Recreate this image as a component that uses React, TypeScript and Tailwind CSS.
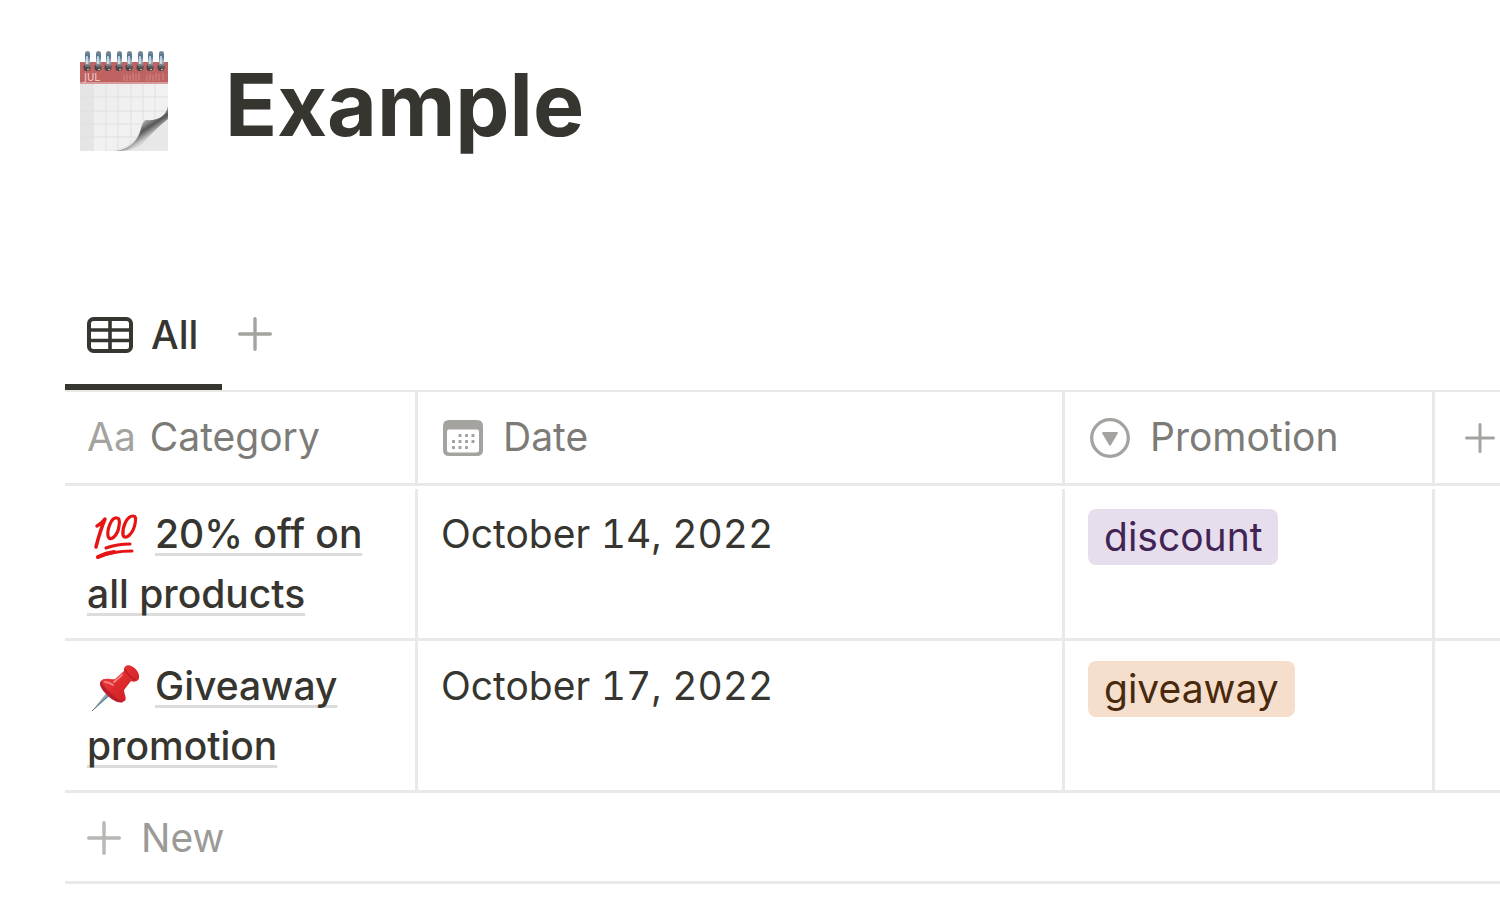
import React from 'react';

interface Entry {
  title: string;
  icon: React.ReactNode;
  date: string;
  promotion: string;
  tagClass: string;
}

function DeskCalendar() {
  const rings = [7, 18, 28, 39, 49, 60, 70, 81];

  return (
    <svg width="90" height="102" viewBox="0 0 90 102" className="shrink-0" aria-hidden="true">
      <defs>
        <linearGradient id="paper" x1="0" y1="0" x2="1" y2="1">
          <stop offset="0" stopColor="#ebebeb" />
          <stop offset="0.6" stopColor="#f2f2f2" />
          <stop offset="1" stopColor="#e8e8e8" />
        </linearGradient>
        <linearGradient id="curl" x1="60" y1="68" x2="72" y2="86" gradientUnits="userSpaceOnUse">
          <stop offset="0" stopColor="#e0e0e0" />
          <stop offset="0.3" stopColor="#a0a0a0" />
          <stop offset="0.6" stopColor="#565656" />
          <stop offset="1" stopColor="#d4d4d4" />
        </linearGradient>
        <linearGradient id="ring" x1="0" y1="0" x2="0" y2="1">
          <stop offset="0" stopColor="#8a8f94" />
          <stop offset="0.3" stopColor="#4f7397" />
          <stop offset="0.6" stopColor="#a9b8c3" />
          <stop offset="1" stopColor="#3d3d3d" />
        </linearGradient>
      </defs>
      <path d="M1 33H89V101H1Z" fill="url(#paper)" />
      <path d="M1 33H14V101H1Z" fill="#e5e5e5" />
      <path d="M14 33V101M27 33V101M39 33V101M52 33V101M64 33V75M76 33V70M1 47H89M1 61H89M1 74H66M1 87H58" stroke="#e0e0e0" strokeWidth="1" fill="none" />
      <path d="M26 101C44 100 55 93 60 83C63 75 64 71 67 70C78 72 87 68 89 60V101Z" fill="#e8e8e8" />
      <path d="M37 101C50 99 58 91 61 82C63 75 64 71 67 70C78 71 87 67 89 56V69C80 76 73 83 66 91C60 98 51 101 37 101Z" fill="url(#curl)" />
      <path d="M1 12H89V33H1Z" fill="#bf6262" />
      <path d="M1 32H89V34H1Z" fill="#d79b9b" />
      <text x="5" y="31" fontSize="10" fill="#efc9c9" fontFamily="DejaVu Sans, sans-serif">JUL</text>
      <path d="M45 25V31M48 24V31M51 25V31M54 23V31M57 24V31M60 23V31M68 25V31M71 24V31M74 25V31M77 23V31M80 24V31M84 23V30" stroke="#cf8787" strokeWidth="1" />
      {rings.map((x) => (
        <g key={x}>
          <circle cx={x + 1} cy="17.500" r="3.5" fill="#4d4343" />
          <circle cx={x + 2} cy="19" r="1.2" fill="#c9b4b4" />
          <rect x={x - 1} y="1" width="5" height="18" rx="2.5" fill="url(#ring)" />
          <path d={`M${x + 1} 6V14`} stroke="#e6edf2" strokeWidth="1.4" />
        </g>
      ))}
    </svg>
  );
}

function HundredIcon() {
  return (
    <svg width="52" height="48" viewBox="0 0 52 48" fill="none" stroke="#e61414" strokeLinecap="round" strokeLinejoin="round" aria-hidden="true">
      <path d="M10 13Q14 11 18 6Q13 18 9 34" strokeWidth="3.5" />
      <path d="M30 5C24 4 20 17 21 23C23 30 31 22 32 13C33 8 32 5 30 5Z" strokeWidth="3.2" />
      <path d="M46 3C40 3 35 14 36 22C38 28 46 21 48 11C49 6 49 3 46 3Z" strokeWidth="3.2" />
      <path d="M19 35Q30 31 43 31" strokeWidth="3.2" />
      <path d="M11 44Q26 38 45 38" strokeWidth="3" />
      <path d="M11 44Q19 40 27 39" strokeWidth="4" />
    </svg>
  );
}

function PushpinIcon() {
  return (
    <svg width="52" height="50" viewBox="0 0 52 50" aria-hidden="true">
      <defs>
        <linearGradient id="pin" x1="0" y1="0" x2="1" y2="1">
          <stop offset="0" stopColor="#f04444" />
          <stop offset="0.5" stopColor="#dd2a2d" />
          <stop offset="1" stopColor="#c81d25" />
        </linearGradient>
      </defs>
      <path d="M5 48L21 28L25 31Z" fill="#8fa9b8" />
      <path d="M5 48L24 30" stroke="#5b6f7c" strokeWidth="1" />
      <path d="M14 18C17 14 25 17 31 23C37 29 40 36 36 39C32 41 25 37 20 32C15 27 11 21 14 18Z" fill="#b91c2b" />
      <path d="M15 17C20 14 25 17 28 16L37 8C36 3 41 0 46 4C51 7 54 14 51 17C49 19 46 19 44 18L37 27C37 31 40 34 38 38C34 38 28 35 24 30C19 26 14 21 15 17Z" fill="url(#pin)" />
      <path d="M38 6C40 11 44 15 49 17" stroke="#b51e2a" strokeWidth="1.5" fill="none" />
      <path d="M27 19L35 12M18 19Q22 19 26 22" stroke="#f58080" strokeWidth="2" strokeLinecap="round" fill="none" />
    </svg>
  );
}

function TableIcon() {
  return (
    <svg width="46" height="36" viewBox="0 0 46 36" fill="none" stroke="#37352f" aria-hidden="true">
      <rect x="2" y="2" width="42" height="32" rx="4.5" strokeWidth="4" />
      <path d="M23 2V34M2 13H44M2 23.5H44" strokeWidth="3.6" />
    </svg>
  );
}

function PlusIcon({ size = 34, color = '#a5a39f' }: { size?: number; color?: string }) {
  return (
    <svg width={size} height={size} viewBox="0 0 34 34" className="shrink-0" stroke={color} strokeWidth="3.4" strokeLinecap="round" aria-hidden="true">
      <path d="M17 1.700V32.300M1.700 17H32.300" />
    </svg>
  );
}

function DateIcon() {
  const dots = [
    [17, 15.5], [23.5, 15.5], [30, 15.5],
    [10.5, 21.5], [17, 21.5], [23.5, 21.5], [30, 21.5],
    [10.5, 27.5], [17, 27.5], [23.5, 27.5],
  ];

  return (
    <svg width="40" height="36" viewBox="0 0 40 36" fill="#a5a39f" aria-hidden="true">
      <path fillRule="evenodd" d="M6 0H34Q40 0 40 6V30Q40 36 34 36H6Q0 36 0 30V6Q0 0 6 0ZM6 9.500Q4 9.500 4 11.500V30Q4 32.500 6.500 32.500H33.500Q36 32.500 36 30V11.500Q36 9.500 34 9.500Z" />
      {dots.map(([x, y]) => (
        <rect key={`${x}-${y}`} x={x - 1.5} y={y - 1.5} width="3" height="3" rx="0.5" />
      ))}
    </svg>
  );
}

function SelectIcon() {
  return (
    <svg width="40" height="40" viewBox="0 0 40 40" aria-hidden="true">
      <circle cx="20" cy="20" r="18.300" fill="none" stroke="#a5a39f" strokeWidth="3.300" />
      <path d="M13 14H27Q28.500 14 27.700 15.500L21 27Q20 28.500 19 27L12.300 15.500Q11.500 14 13 14Z" fill="#a5a39f" />
    </svg>
  );
}

const entries: Entry[] = [
  {
    title: '20% off on all products',
    icon: <HundredIcon />,
    date: 'October 14, 2022',
    promotion: 'discount',
    tagClass: 'bg-[#e6deed] text-[#412454]',
  },
  {
    title: 'Giveaway promotion',
    icon: <PushpinIcon />,
    date: 'October 17, 2022',
    promotion: 'giveaway',
    tagClass: 'bg-[#f5dfcc] text-[#49290e]',
  },
];

function HeaderCell({ icon, label }: { icon: React.ReactNode; label: string }) {
  return (
    <th scope="col" className="border-r-3 border-b-3 border-[#e9e9e7] pl-[25px] font-normal">
      <div className="flex h-[91px] items-center gap-5">
        {icon}
        <span>{label}</span>
      </div>
    </th>
  );
}

export default function App() {
  return (
    <main className="min-h-screen overflow-x-hidden bg-white pl-[65px] font-['Inter',sans-serif] text-[39px] text-[#37352f]">
      <header className="flex items-center gap-14 pt-[50px] pl-3.5">
        <DeskCalendar />
        <h1 className="pt-2 text-[86px] leading-[94px] font-bold">Example</h1>
      </header>

      <nav className="mt-[126px] flex h-[114px] items-stretch border-b-2 border-[#e9e9e7]">
        <button type="button" className="flex items-center gap-[18px] border-b-6 border-[#37352f] pt-2 pr-6 pl-[22px] font-medium">
          <TableIcon />
          All
        </button>
        <button type="button" aria-label="Add view" className="ml-4">
          <PlusIcon />
        </button>
      </nav>

      <table className="w-full table-fixed border-separate border-spacing-0 text-left">
        <colgroup>
          <col className="w-[353px]" />
          <col />
          <col className="w-[370px]" />
          <col className="w-[65px]" />
        </colgroup>
        <thead className="text-[#7d7b77]">
          <tr>
            <th scope="col" className="border-r-3 border-b-3 border-[#e9e9e7] pl-[22px] font-normal">
              <div className="flex h-[91px] items-center gap-3.5">
                <span className="text-[#a5a39f]">Aa</span>
                <span>Category</span>
              </div>
            </th>
            <HeaderCell icon={<DateIcon />} label="Date" />
            <HeaderCell icon={<SelectIcon />} label="Promotion" />
            <th scope="col" className="border-b-3 border-[#e9e9e7] pl-[30px]">
              <button type="button" aria-label="Add property" className="flex">
                <PlusIcon size={30} />
              </button>
            </th>
          </tr>
        </thead>
        <tbody className="align-top leading-[60px] before:block before:h-[3px] before:content-['']">
          {entries.map((entry) => (
            <tr key={entry.title}>
              <td className="border-r-3 border-b-3 border-[#e9e9e7] pt-[15px] pr-6 pb-3.5 pl-[22px] font-medium">
                <span className="mr-4 inline-flex h-[48px] w-[52px] items-center align-[-13px]">{entry.icon}</span>
                <a href="#" className="underline decoration-[#dcdcda] decoration-3 underline-offset-[5px] [text-decoration-skip-ink:none]">
                  {entry.title}
                </a>
              </td>
              <td className="border-r-3 border-b-3 border-[#e9e9e7] px-[23px] pt-[15px] tabular-nums">{entry.date}</td>
              <td className="border-r-3 border-b-3 border-[#e9e9e7] px-[23px] pt-5">
                <span className={`block w-fit rounded-lg px-4 leading-[56px] ${entry.tagClass}`}>{entry.promotion}</span>
              </td>
              <td className="border-b-3 border-[#e9e9e7]" />
            </tr>
          ))}
        </tbody>
      </table>

      <button type="button" className="flex h-[91px] w-full items-center gap-5 border-b-3 border-[#e9e9e7] pt-0.5 pl-[22px] text-[#9b9a97]">
        <PlusIcon color="#b8b7b4" />
        New
      </button>
    </main>
  );
}
